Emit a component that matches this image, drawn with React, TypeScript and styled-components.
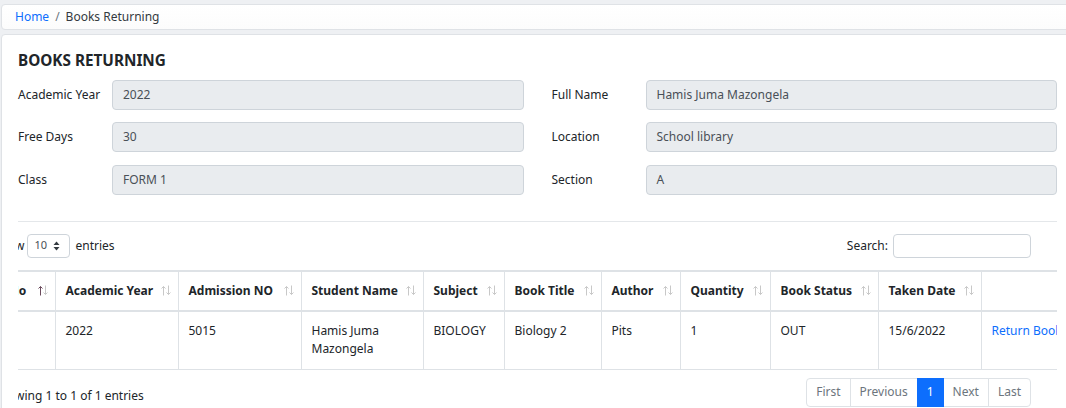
import React from "react";
import styled, { createGlobalStyle } from "styled-components";

const GlobalStyle = createGlobalStyle`
  html, body {
    margin: 0;
    padding: 0;
    background: #eef0f3;
    overflow: hidden;
  }
  body {
    font-family: "Noto Sans", "Open Sans", Arial, sans-serif;
    font-size: 12px;
    line-height: 1.5;
    color: #212529;
  }
  * { box-sizing: border-box; }
`;

const Page = styled.div`
  padding: 4px 0 0 1px;
  width: 1110px;
`;

const Breadcrumb = styled.nav`
  display: flex;
  align-items: center;
  height: 26px;
  padding: 0 13px;
  background: linear-gradient(#ffffff, #fcfcfc);
  border: 1px solid #dfe2e6;
  border-radius: 4px;
  margin-bottom: 4px;
  width: 1100px;
`;

const Crumb = styled.span<{ $link?: boolean }>`
  color: ${(p) => (p.$link ? "#0d6efd" : "#343a40")};
`;

const Sep = styled.span`
  color: #6c757d;
  padding: 0 6px;
`;

const Card = styled.section`
  width: 1073px;
  min-height: 380px;
  background: #fff;
  border: 1px solid #dfe2e6;
  border-radius: 4px;
  padding: 16px;
`;

const Title = styled.h5`
  margin: 0 0 10.5px;
  font-size: 15.3px;
  line-height: 18px;
  font-weight: 700;
  color: #212529;
`;

const FormGrid = styled.div`
  display: grid;
  grid-template-columns: 1fr 1fr;
  column-gap: 28px;
  row-gap: 12.5px;
`;

const Field = styled.div`
  display: flex;
  align-items: center;
`;

const Label = styled.label`
  width: 94px;
  flex: none;
  color: #212529;
`;

const ReadOnly = styled.div`
  flex: 1;
  height: 30px;
  display: flex;
  align-items: center;
  padding: 0 10px;
  background: #e9ecef;
  border: 1px solid #ced4da;
  border-radius: 4px;
  color: #495057;
`;

const Divider = styled.hr`
  margin: 26px 0 0;
  border: 0;
  border-top: 1px solid #e4e7ea;
`;

const Clip = styled.div`
  margin-top: 12px;
  overflow: hidden;
`;

const Scroller = styled.div`
  margin-left: -24px;
  width: 1037px;
`;

const TopBar = styled.div`
  display: flex;
  justify-content: space-between;
  align-items: center;
  height: 24px;
`;

const LenLabel = styled.div`
  display: flex;
  align-items: center;
  gap: 3px;
`;

const SelectBox = styled.div`
  display: flex;
  align-items: center;
  justify-content: space-between;
  width: 43px;
  height: 24px;
  margin: 0 2px 0 0;
  padding: 0 9px 0 6px;
  border: 1px solid #ced4da;
  border-radius: 4px;
  font-size: 11px;
  color: #495057;
`;

const SearchLabel = styled.label`
  display: flex;
  align-items: center;
  gap: 5px;
`;

const SearchInput = styled.input`
  width: 138px;
  height: 24px;
  border: 1px solid #ced4da;
  border-radius: 4px;
  padding: 0 6px;
  font: inherit;
  outline: none;
`;

const Table = styled.table`
  margin: 12px 0 0 5px;
  width: 1082px;
  table-layout: fixed;
  border-collapse: collapse;
  border-top: 2px solid #dee2e6;
`;

const Th = styled.th<{ $w: number }>`
  width: ${(p) => p.$w}px;
  padding: 10px 7px 10px 10px;
  text-align: left;
  font-weight: 700;
  line-height: 18px;
  border-right: 1px solid #dee2e6;
  border-bottom: 2px solid #dee2e6;
  white-space: nowrap;
`;

const HeadInner = styled.div`
  display: flex;
  align-items: center;
  justify-content: space-between;
  gap: 6px;
`;

const Td = styled.td<{ $link?: boolean }>`
  padding: 10px 10px 11px;
  vertical-align: top;
  line-height: 18px;
  border-right: 1px solid #dee2e6;
  border-bottom: 1px solid #dee2e6;
  color: ${(p) => (p.$link ? "#0d6efd" : "#212529")};
  white-space: ${(p) => (p.$link ? "nowrap" : "normal")};
`;

const Footer = styled.div`
  display: flex;
  justify-content: space-between;
  align-items: flex-start;
  margin-top: 8px;
`;

const Info = styled.div`
  padding-top: 9px;
`;

const Pager = styled.ul`
  display: flex;
  list-style: none;
  margin: 0;
  padding: 0;
`;

const PageBtn = styled.li<{ $active?: boolean; $first?: boolean; $last?: boolean }>`
  height: 29px;
  display: flex;
  align-items: center;
  padding: 0 9px;
  margin-left: ${(p) => (p.$first ? "0" : "-1px")};
  border: 1px solid ${(p) => (p.$active ? "#0d6efd" : "#dee2e6")};
  background: ${(p) => (p.$active ? "#0d6efd" : "#fff")};
  color: ${(p) => (p.$active ? "#fff" : "#6c757d")};
  border-radius: ${(p) =>
    p.$first ? "4px 0 0 4px" : p.$last ? "0 4px 4px 0" : "0"};
  position: relative;
  z-index: ${(p) => (p.$active ? 1 : 0)};
`;

const SortIcon = ({ active }: { active?: boolean }) => (
  <svg width="10" height="11" viewBox="0 0 10 11" fill="none" strokeWidth="1">
    <g stroke={active ? "#6b4a5c" : "#c8c8c8"}>
      <path d="M2.5 1.5V10.5" />
      <path d="M0.5 3.5L2.5 1.5L4.5 3.5" />
    </g>
    <g stroke="#c8c8c8">
      <path d="M7.5 0.5V9.5" />
      <path d="M5.5 7.5L7.5 9.5L9.5 7.5" />
    </g>
  </svg>
);

const UpDown = () => (
  <svg width="7" height="10" viewBox="0 0 7 10">
    <path d="M3.5 0.5L6.5 4H0.5Z" fill="#343a40" />
    <path d="M3.5 9.5L6.5 6H0.5Z" fill="#343a40" />
  </svg>
);

const fields: [string, string][] = [
  ["Academic Year", "2022"],
  ["Full Name", "Hamis Juma Mazongela"],
  ["Free Days", "30"],
  ["Location", "School library"],
  ["Class", "FORM 1"],
  ["Section", "A"],
];

const columns: { label: string; w: number; active?: boolean; sortable?: boolean }[] = [
  { label: "No", w: 56, active: true, sortable: true },
  { label: "Academic Year", w: 123, sortable: true },
  { label: "Admission NO", w: 123, sortable: true },
  { label: "Student Name", w: 122, sortable: true },
  { label: "Subject", w: 81, sortable: true },
  { label: "Book Title", w: 97, sortable: true },
  { label: "Author", w: 79, sortable: true },
  { label: "Quantity", w: 90, sortable: true },
  { label: "Book Status", w: 108, sortable: true },
  { label: "Taken Date", w: 103, sortable: true },
  { label: "", w: 100 },
];

const row = ["1", "2022", "5015", "Hamis Juma Mazongela", "BIOLOGY", "Biology 2", "Pits", "1", "OUT", "15/6/2022"];

export default function App() {
  return (
    <>
      <GlobalStyle />
      <Page>
        <Breadcrumb>
          <Crumb $link>Home</Crumb>
          <Sep>/</Sep>
          <Crumb>Books Returning</Crumb>
        </Breadcrumb>
        <Card>
          <Title>BOOKS RETURNING</Title>
          <FormGrid>
            {fields.map(([l, v]) => (
              <Field key={l}>
                <Label>{l}</Label>
                <ReadOnly>{v}</ReadOnly>
              </Field>
            ))}
          </FormGrid>
          <Divider />
          <Clip>
            <Scroller>
              <TopBar>
                <LenLabel>
                  Show
                  <SelectBox>
                    10
                    <UpDown />
                  </SelectBox>
                  entries
                </LenLabel>
                <SearchLabel>
                  Search:
                  <SearchInput type="search" />
                </SearchLabel>
              </TopBar>
              <Table>
                <thead>
                  <tr>
                    {columns.map((c, i) => (
                      <Th key={i} $w={c.w}>
                        <HeadInner>
                          <span>{c.label}</span>
                          {c.sortable && <SortIcon active={c.active} />}
                        </HeadInner>
                      </Th>
                    ))}
                  </tr>
                </thead>
                <tbody>
                  <tr>
                    {row.map((v, i) => (
                      <Td key={i}>{v}</Td>
                    ))}
                    <Td $link>Return Book</Td>
                  </tr>
                </tbody>
              </Table>
              <Footer>
                <Info>Showing 1 to 1 of 1 entries</Info>
                <Pager>
                  <PageBtn $first>First</PageBtn>
                  <PageBtn>Previous</PageBtn>
                  <PageBtn $active>1</PageBtn>
                  <PageBtn>Next</PageBtn>
                  <PageBtn $last>Last</PageBtn>
                </Pager>
              </Footer>
            </Scroller>
          </Clip>
        </Card>
      </Page>
    </>
  );
}
